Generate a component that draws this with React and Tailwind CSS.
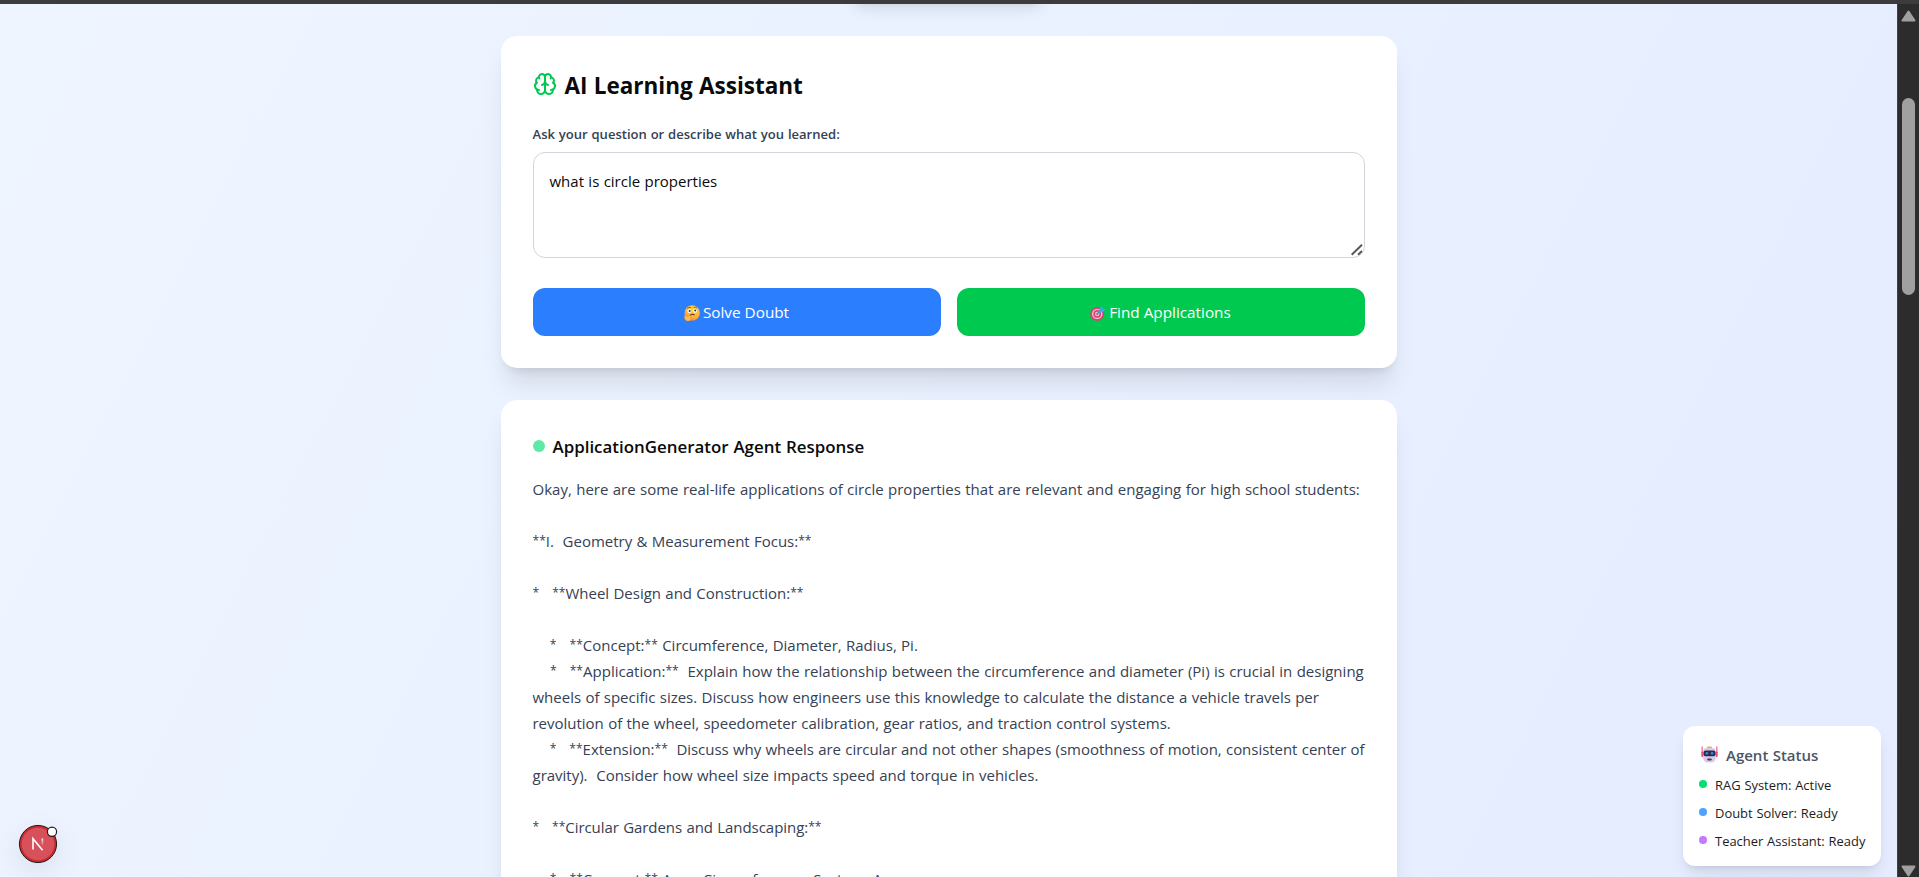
import { Brain } from "lucide-react";

const LINES = [
  "Okay, here are some real-life applications of circle properties that are relevant and engaging for high school students:",
  "",
  "**I.  Geometry & Measurement Focus:**",
  "",
  "*   **Wheel Design and Construction:**",
  "",
  "    *   **Concept:** Circumference, Diameter, Radius, Pi.",
  "    *   **Application:**  Explain how the relationship between the circumference and diameter (Pi) is crucial in designing",
  "wheels of specific sizes. Discuss how engineers use this knowledge to calculate the distance a vehicle travels per",
  "revolution of the wheel, speedometer calibration, gear ratios, and traction control systems.",
  "    *   **Extension:**  Discuss why wheels are circular and not other shapes (smoothness of motion, consistent center of",
  "gravity).  Consider how wheel size impacts speed and torque in vehicles.",
  "",
  "*   **Circular Gardens and Landscaping:**",
  "",
  "    *   **Concept:** Area, Circumference, Sectors, Arcs.",
];

const TRACKING = {
  0: "tracking-[0.01px]",
  7: "tracking-[0.01px]",
  10: "tracking-[-0.035px]",
  13: "tracking-[-0.05px]",
};

const AGENTS = [
  ["RAG System: Active", "bg-[#05df72]"],
  ["Doubt Solver: Ready", "bg-[#51a2ff]"],
  ["Teacher Assistant: Ready", "bg-[#c27aff]"],
];

// Asterisks are set smaller and raised to the cap height of the line.
function Line({ text, tracking = "tracking-[-0.01px]" }) {
  return (
    <div className={`h-[26px] whitespace-pre leading-[26px] ${tracking}`}>
      {text.split(/(\*+)/).map((part, i) =>
        part.startsWith("*") ? (
          <span key={i} className="align-[2px] text-[12.1px] leading-none">{part}</span>
        ) : (
          part
        )
      )}
    </div>
  );
}

function ThinkingFace() {
  return (
    <svg viewBox="0 0 16 16" className="mt-0.5 size-4">
      <defs>
        <radialGradient id="face" cx="0.6" cy="0.3" r="0.75">
          <stop offset="0" stopColor="#ffd63f" />
          <stop offset="0.65" stopColor="#fbb13a" />
          <stop offset="1" stopColor="#ee7f3f" />
        </radialGradient>
      </defs>
      <circle cx="8.2" cy="8" r="7.7" fill="url(#face)" />
      <circle cx="5.3" cy="6" r="2" fill="#fff" />
      <circle cx="11" cy="5.8" r="2" fill="#fff" />
      <circle cx="5.6" cy="5.9" r="1" fill="#3b2b3c" />
      <circle cx="11.2" cy="5.6" r="1" fill="#3b2b3c" />
      <path d="M3.5 3.2q1.4-1.3 3-.8M10 2.2q1.6-.5 2.8.7" fill="none" stroke="#7a4435" strokeWidth=".8" strokeLinecap="round" />
      <path d="M6.4 10.1q1.8-1.4 3.8-.3" fill="none" stroke="#552f3c" strokeWidth="1.1" strokeLinecap="round" />
      <path d="M.7 10.2c.9-.6 1.6.1 1.8 1.2l4.6-.6c1.2 0 1.3 1.3.2 1.6l-1 .3c.8 1.3.2 3.2-1.9 3.4C1.9 16.2.6 14.5.5 12.7Z" fill="#ffbd45" stroke="#e88335" strokeWidth=".4" />
    </svg>
  );
}

function TargetDart() {
  return (
    <svg viewBox="0 0 16 16" className="mt-0.5 size-4">
      <circle cx="7.2" cy="8.9" r="7" fill="#d9416c" />
      <circle cx="7.2" cy="8.9" r="5.2" fill="#e9c9dc" />
      <circle cx="7.2" cy="8.9" r="3.9" fill="#dc4770" />
      <circle cx="7.2" cy="8.9" r="2.2" fill="#e9c9dc" />
      <circle cx="7.2" cy="8.9" r="1" fill="#d9416c" />
      <path d="M7.4 8.7 11 5" stroke="#3b7fc4" strokeWidth="1.2" />
      <path d="M8.6 6.2 11.2.8l1.3 2.5 3 .9-2.3 2.7-4.2 1Z" fill="#3aa6ee" />
    </svg>
  );
}

function Robot() {
  return (
    <svg viewBox="0 0 17 17" className="h-[17px] w-[17px]">
      <path d="M1.2 1v6M15.800 1v6" stroke="#f27a9b" strokeWidth="1.4" strokeLinecap="round" />
      <rect x=".3" y="5.5" width="2.4" height="5.5" rx="1" fill="#e0527f" />
      <rect x="14.3" y="5.5" width="2.4" height="5.5" rx="1" fill="#e0527f" />
      <rect x="6" y=".6" width="5" height="2.6" rx="1" fill="#f3b13c" />
      <path d="M2.2 5.5q0-3.5 3.5-3.5h5.600q3.500 0 3.500 3.500v5q0 6-4.500 6H6.700q-4.500 0-4.500-6Z" fill="#d9cbe6" />
      <rect x="2.5" y="4.6" width="12" height="5.6" rx="2" fill="#2c2a4e" />
      <circle cx="5.9" cy="7.3" r="1.4" fill="#2e8fd6" />
      <circle cx="11.1" cy="7.3" r="1.4" fill="#2e8fd6" />
      <rect x="6.2" y="12.5" width="4.6" height="1.9" rx=".9" fill="#4a3c63" />
    </svg>
  );
}

function NextBadge() {
  return (
    <svg viewBox="0 0 44 44" className="absolute bottom-[11px] left-4 size-11 overflow-visible drop-shadow-[0_8px_12px_rgba(0,0,0,0.08)]">
      <defs>
        <linearGradient id="stem" x1="0" y1="16" x2="0" y2="24" gradientUnits="userSpaceOnUse">
          <stop stopColor="#fff" />
          <stop offset="1" stopColor="#fff" stopOpacity="0" />
        </linearGradient>
      </defs>
      <circle cx="22" cy="22" r="18.6" fill="#ca2a30" stroke="#1d1d1d" strokeWidth="1" />
      <circle cx="22" cy="22" r="16.3" fill="#d6515a" />
      <path d="M17 27.5V16.800L26.600 28.200" fill="none" stroke="#fff" strokeWidth="1.6" />
      <path d="M26.4 16.500v8" stroke="url(#stem)" strokeWidth="1.6" />
      <circle cx="36" cy="9.7" r="4.6" fill="#fff" stroke="#1d1d1d" strokeWidth="1.2" />
    </svg>
  );
}

function Scrollbar() {
  return (
    <div className="flex h-full w-[22px] flex-col items-center border-l border-[#3d4248] bg-[#2c2c2c]">
      <svg viewBox="0 0 15 12" className="mt-1.5 h-3 w-[15px] shrink-0">
        <path d="M7.5 1.5 13.5 10.5h-12Z" fill="#a0a0a0" stroke="#a0a0a0" strokeWidth="2" strokeLinejoin="round" />
      </svg>
      <div className="mt-[76px] h-[197px] w-[13px] shrink-0 rounded-full bg-[#a0a0a0]" />
      <svg viewBox="0 0 15 12" className="mt-auto h-3 w-[15px] shrink-0">
        <path d="M7.5 10.5 13.5 1.5h-12Z" fill="#a0a0a0" stroke="#a0a0a0" strokeWidth="2" strokeLinejoin="round" />
      </svg>
    </div>
  );
}

export default function App() {
  return (
    <div className="flex h-[877px] w-[1919px] flex-col overflow-hidden bg-[#3c3c3c] font-['Open_Sans','Noto_Sans',sans-serif] text-[15px] text-[#0a0a0a] [word-spacing:0.45px]">
      <div className="h-1 shrink-0" />
      <div className="flex h-[873px]">
        <div className="relative flex h-full w-[1897px] justify-center overflow-hidden bg-[linear-gradient(to_bottom_right,#eff6ff,#e0e7ff)] bg-[length:100%_3714px] bg-[position:0_-337px] bg-no-repeat">
          <div className="absolute -top-12 left-[851px] h-[46px] w-[194px] rounded-xl bg-white shadow-lg" />
          <div className="flex w-4xl flex-col gap-8 pt-8">
            <div className="h-[332px] shrink-0 rounded-2xl bg-white p-8 shadow-xl">
              <h2 className="flex h-8 items-center text-[22.5px] font-bold">
                <Brain className="mr-2 size-6 text-[#00c950]" />
                <span className="pt-[3px]">AI Learning Assistant</span>
              </h2>
              <label className="mt-6 block h-5 text-[13.05px]/5 font-semibold text-[#364153]">Ask your question or describe what you learned:</label>
              <div className="relative mt-2">
                <textarea
                  readOnly
                  className="block h-[106px] w-full resize-none rounded-xl border border-[#d1d5dc] px-4 pt-4 leading-6 [word-spacing:0.45px]"
                  value="what is circle properties"
                />
                <svg viewBox="0 0 12 12" className="absolute right-[2px] bottom-[2px] size-3">
                  <path d="M.7 10.7 11 .7M7 10.7 11 7" fill="none" stroke="#555" strokeWidth="1.9" />
                </svg>
              </div>
              <div className="mt-[30px] flex gap-4 text-[15.3px] text-white">
                <button className="flex h-12 flex-1 items-center justify-center gap-[3px] rounded-xl bg-[#2b7fff]">
                  <ThinkingFace />
                  <span>Solve Doubt</span>
                </button>
                <button className="flex h-12 flex-1 items-center justify-center gap-[3px] rounded-xl bg-[#00c950]">
                  <TargetDart />
                  <span>Find Applications</span>
                </button>
              </div>
            </div>
            <div className="h-[600px] shrink-0 rounded-2xl bg-white p-8 shadow-xl">
              <h3 className="flex h-7 items-center text-[16.9px] font-semibold">
                <span className="mr-2 size-3 rounded-full bg-[#5fe9a6]" />
                <span className="pt-0.5">ApplicationGenerator Agent Response</span>
              </h3>
              <div className="mt-4 text-[#364153]">
                {LINES.map((text, i) => (
                  <Line key={i} text={text} tracking={TRACKING[i]} />
                ))}
              </div>
            </div>
          </div>
          <div className="absolute right-4 bottom-[11px] h-[140px] w-[198px] rounded-xl bg-white p-4 shadow-lg">
            <div className="flex h-6 items-center gap-2 pl-0.5 font-semibold text-[#4a5565]">
              <Robot />
              <span className="pt-0.5">Agent Status</span>
            </div>
            <div className="mt-2 flex flex-col gap-2 text-[12.95px]/5 text-[#1c1c1c]">
              {AGENTS.map(([label, dot]) => (
                <div key={label} className="flex h-5 items-center gap-2 whitespace-nowrap">
                  <span className={`size-2 shrink-0 rounded-full ${dot}`} />
                  <span className="pt-px">{label}</span>
                </div>
              ))}
            </div>
          </div>
          <NextBadge />
        </div>
        <Scrollbar />
      </div>
    </div>
  );
}
